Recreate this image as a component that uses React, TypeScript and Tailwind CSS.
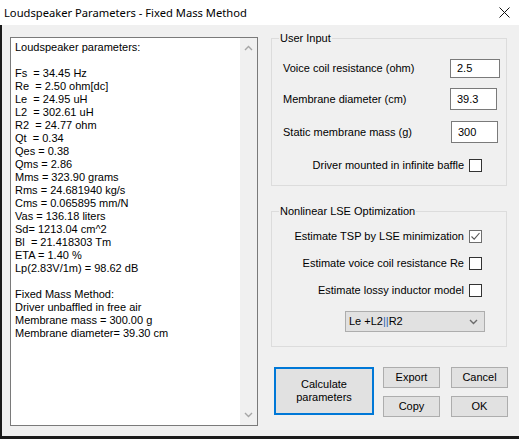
import React from 'react';

const report = [
  'Loudspeaker parameters:',
  '',
  'Fs  = 34.45 Hz',
  'Re  = 2.50 ohm[dc]',
  'Le  = 24.95 uH',
  'L2  = 302.61 uH',
  'R2  = 24.77 ohm',
  'Qt  = 0.34',
  'Qes = 0.38',
  'Qms = 2.86',
  'Mms = 323.90 grams',
  'Rms = 24.681940 kg/s',
  'Cms = 0.065895 mm/N',
  'Vas = 136.18 liters',
  'Sd= 1213.04 cm^2',
  'Bl  = 21.418303 Tm',
  'ETA = 1.40 %',
  'Lp(2.83V/1m) = 98.62 dB',
  '',
  'Fixed Mass Method:',
  'Driver unbaffled in free air',
  'Membrane mass = 300.00 g',
  'Membrane diameter= 39.30 cm',
];

function Chevron({ up, color = '#a6a6a6' }: { up?: boolean; color?: string }) {
  return (
    <svg width="9" height="6" viewBox="0 0 9 6">
      <path
        d={up ? 'M1 5 L4.5 1.5 L8 5' : 'M1 1 L4.5 4.5 L8 1'}
        fill="none"
        stroke={color}
        strokeWidth={1.4}
      />
    </svg>
  );
}

function CheckBox({ checked }: { checked?: boolean }) {
  return (
    <span
      className={`flex h-[13px] w-[13px] items-center justify-center border bg-white ${
        checked ? 'border-[#6e6e6e]' : 'border-[#333333]'
      }`}
    >
      {checked && (
        <svg width="11" height="11" viewBox="0 0 11 11">
          <path d="M1.5 5.5 L4.2 8.2 L9.5 2" fill="none" stroke="#555555" strokeWidth={1.1} />
        </svg>
      )}
    </span>
  );
}

function CheckRow({ label, checked, className }: { label: string; checked?: boolean; className: string }) {
  return (
    <div className={`flex h-[13px] items-center justify-end gap-[5px] pr-[24px] ${className}`}>
      <span>{label}</span>
      <CheckBox checked={checked} />
    </div>
  );
}

function Field({ label, value, box, className }: { label: string; value: string; box: string; className: string }) {
  return (
    <div className={`flex items-center ${className}`}>
      <span className="w-[167px]">{label}</span>
      <div className={`flex items-center border border-[#7a7a7a] bg-white pl-[6px] ${box}`}>{value}</div>
    </div>
  );
}

function Button({ children, className = '' }: { children: React.ReactNode; className?: string }) {
  return (
    <button className={`flex h-[21px] w-[57px] items-center justify-center border border-[#adadad] bg-[#e1e1e1] ${className}`}>
      {children}
    </button>
  );
}

export default function App() {
  return (
    <div className="h-[439px] w-[519px] overflow-hidden bg-[#1b1b1b] font-['Liberation_Sans',Arial,sans-serif] text-[11px] leading-[13px] text-black">
      {/* title bar */}
      <div className="flex h-[25px] items-center justify-between bg-white pl-[4px] pr-[9px]">
        <span className="font-['Noto_Sans',sans-serif] text-[11.2px]">Loudspeaker Parameters - Fixed Mass Method</span>
        <svg width="11" height="11" viewBox="0 0 11 11">
          <path d="M0.5 0.5 L10.5 10.5 M10.5 0.5 L0.5 10.5" stroke="#111" strokeWidth={1} />
        </svg>
      </div>

      <div className="ml-[2px] flex h-[411px] items-start bg-[#f0f0f0] pl-[8px] pt-[7px]">
        {/* report text box */}
        <div className="mt-[5px] flex h-[389px] w-[248px] border border-[#7a7a7a] bg-white">
          <div className="flex-1 whitespace-pre pl-[4px] pt-[3px]">
            {report.map((line, i) => (
              <div key={i} className="h-[13px]">{line}</div>
            ))}
          </div>
          <div className="flex w-[17px] flex-col items-center justify-between bg-[#f0f0f0] py-[7px]">
            <Chevron up />
            <Chevron />
          </div>
        </div>

        <div className="ml-[13px] w-[237px]">
          <fieldset className="w-[236px] border border-[#dcdcdc]">
            <legend className="ml-[7px] px-[1px] leading-[13px]">User Input</legend>
            <div className="flex flex-col pl-[11px] pb-[13px]">
              <Field className="mt-[14px] h-[19px]" label="Voice coil resistance (ohm)" value="2.5" box="h-[19px] w-[50px]" />
              <Field className="mt-[10px] h-[22px]" label="Membrane diameter (cm)" value="39.3" box="h-[22px] w-[47px]" />
              <Field className="mt-[11px] h-[22px]" label="Static membrane mass (g)" value="300" box="ml-[1px] h-[22px] w-[47px]" />
              <CheckRow className="mt-[16px]" label="Driver mounted in infinite baffle" />
            </div>
          </fieldset>

          <fieldset className="mt-[19px] w-[236px] border border-[#dcdcdc]">
            <legend className="ml-[7px] px-[1px] leading-[13px]">Nonlinear LSE Optimization</legend>
            <div className="flex flex-col pb-[14px]">
              <CheckRow className="mt-[12px]" label="Estimate TSP by LSE minimization" checked />
              <CheckRow className="mt-[14px]" label="Estimate voice coil resistance Re" />
              <CheckRow className="mt-[14px]" label="Estimate lossy inductor model" />
              <div className="ml-[73px] mt-[14px] flex h-[21px] w-[140px] items-center justify-between border border-[#adadad] bg-[#e1e1e1] pl-[3px] pr-[6px]">
                <span>
                  Le +L2<span className="text-[#2f63b0]">||</span>R2
                </span>
                <Chevron color="#6b6b6b" />
              </div>
            </div>
          </fieldset>

          {/* action buttons */}
          <div className="mt-[20px] flex">
            <button className="ml-[3px] flex h-[48px] w-[100px] flex-col items-center justify-center border-2 border-[#0078d7] bg-[#e1e1e1]">
              <span>Calculate</span>
              <span>parameters</span>
            </button>
            <div className="ml-[9px] flex flex-col gap-[8px]">
              <Button>Export</Button>
              <Button>Copy</Button>
            </div>
            <div className="ml-[11px] flex flex-col gap-[8px]">
              <Button>Cancel</Button>
              <Button>OK</Button>
            </div>
          </div>
        </div>
      </div>
    </div>
  );
}
